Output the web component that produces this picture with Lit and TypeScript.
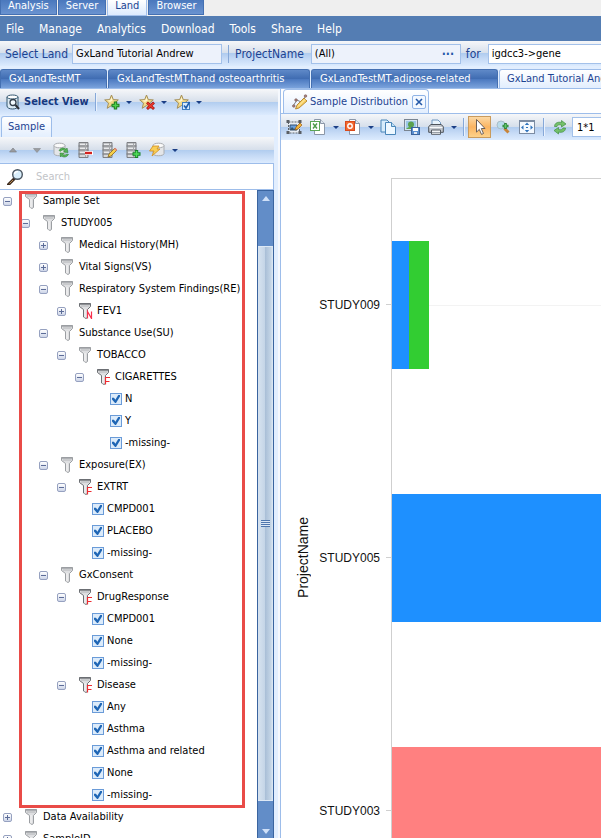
import { LitElement, html, css, svg, nothing } from "lit";
import { customElement, property, state } from "lit/decorators.js";
import { classMap } from "lit/directives/class-map.js";

const star = svg`<path d="M7.5 1 L9.3 5.6 L14.3 5.9 L10.5 9.1 L11.8 14.3 L7.5 11.5 L3.2 14.3 L4.5 9.1 L.7 5.9 L5.7 5.6Z" fill="#f3da8a" stroke="#a5905a" stroke-width="1"/><path d="M7.5 3 L8.6 6.4 L6 8 L3 6.6 L6.3 6.3Z" fill="#fff6cf"/>`;
const rack = svg`<path d="M2 .5h9v15H2z" fill="#c4c6c9" stroke="#7d7f83"/><path d="M1.500 4h10M1.500 8h10M1.500 12h10" stroke="#75777b"/><path d="M3 2.500h7M3 6.500h7M3 10.500h7M3 14h7" stroke="#e9eaec"/><path d="M8.500 1v14" stroke="#a6a8ab"/>`;
const drum = svg`<path d="M1 3.500v8c0 3 11 3 11 0v-8" fill="#e4e6e9" stroke="#a9acb0"/><ellipse cx="6.500" cy="3.500" rx="5.500" ry="2.300" fill="#fafafa" stroke="#a9acb0"/>`;
const sheet = svg`<path d="M4.500 .5h6l4 4v11h-10z" fill="#fff" stroke="#8b97a8"/><path d="M10.500 .5v4h4" fill="#dfe6ef" stroke="#8b97a8"/>`;

const icons: Record<string, unknown> = {
  view: svg`<path d="M2 3v9c0 4 11 4 11 0V3" fill="#dcebf5" stroke="#33566f"/><ellipse cx="7.500" cy="3" rx="5.500" ry="2" fill="#fff" stroke="#33566f"/><circle cx="8" cy="8.500" r="3" fill="#f4fbff" stroke="#333f4a" stroke-width="1.300"/><path d="M10.500 11l3.500 4" stroke="#2b2f35" stroke-width="2"/>`,
  starAdd: svg`${star}<path d="M11.500 7.500v8M7.500 11.500h8" stroke="#1f7a1f" stroke-width="3.400"/><path d="M11.500 8.500v6M8.500 11.500h6" stroke="#4fd24f" stroke-width="1.400"/>`,
  starDel: svg`${star}<path d="M8 8.500l7 6.500M15 8.500l-7 6.500" stroke="#a81410" stroke-width="2.800"/><path d="M8.500 9l6 5.500M14.500 9l-6 5.500" stroke="#ef3b30" stroke-width="1.300"/>`,
  starCheck: svg`${star}<rect x="8.500" y="8.500" width="7" height="7" fill="#d7eafc" stroke="#3f7fc0"/><path d="M10 11.500l2 2.500 3.500-6" fill="none" stroke="#1d5fae" stroke-width="1.600"/>`,
  up: svg`<path d="M8 6l3.500 4h-7z" fill="#9a9ca0" stroke="#77797d" stroke-width=".6"/>`,
  down: svg`<path d="M8 10.500L4.500 6.500h7z" fill="#9a9ca0" stroke="#85888c" stroke-width=".6"/>`,
  dbRefresh: svg`${drum}<path d="M6 8.500c2-3 5-3 7-1l1-1.500 1 4.500-4.500-.5 1.200-1.200c-1.500-1.300-3-1-4 .5z" fill="#56b556" stroke="#2c7f32" stroke-width=".6"/><path d="M15.500 12.500c-2 3-5 3-7 1.500l-1 1-.5-4 4 .3-1.200 1.200c1.500 1.200 3 .8 3.800-.5z" fill="#56b556" stroke="#2c7f32" stroke-width=".6"/>`,
  rackDel: svg`${rack}<path d="M8 11h8" stroke="#fff" stroke-width="4"/><path d="M8 11h7" stroke="#d3221f" stroke-width="2.400"/>`,
  rackEdit: svg`${rack}<path d="M7 15l1-3 6-6 2 2-6 6z" fill="#f6cf4a" stroke="#8a6a1f" stroke-width=".8"/><path d="M13 7l1.200-1.200 2 2L15 9z" fill="#e58a86"/>`,
  rackAdd: svg`${rack}<path d="M11.500 8v8M7.500 12h8" stroke="#178027" stroke-width="3.400"/><path d="M11.500 9v6M8.500 12h6" stroke="#52dd5b" stroke-width="1.600"/>`,
  dbFlash: svg`<g transform="translate(3 0)">${drum}</g><path d="M4 4h6L8 7h3l-8 7 2-5H.5z" fill="#f8ce57" stroke="#d08e1c" stroke-width=".8"/>`,
  chart: svg`<path d="M1 12l4-6 4 2 5-6" fill="none" stroke="#7d7f83"/><g fill="#a9837f" stroke="#6b4a47" stroke-width=".5"><circle cx="1.800" cy="12" r="1.300"/><circle cx="4" cy="6" r="1.300"/><circle cx="13.500" cy="2" r="1.300"/></g><path d="M3.500 15l1.500-4L12 4l3 3-8 7z" fill="#f8cf62" stroke="#a9771e" stroke-width=".8"/><path d="M6 12.500l7-7" stroke="#fff0b5"/>`,
  edit: svg`<rect x="2.500" y="3" width="11" height="11" fill="#e8eef5" stroke="#5d6269" stroke-dasharray="2 1"/><path d="M4 11V6h7v5z" fill="#6aa0de" stroke="#37516f"/><path d="M4 11l2-3 2 2 1.500-1L11 11z" fill="#35556f"/><path d="M.5 1h3v3h-3zM12.500 1h3v3h-3zM.5 12h3v3h-3zM12.500 12h3v3h-3z" fill="#5a5e64"/><path d="M9 11l1-3 4-4 2 2-4 4z" fill="#f3b53c" stroke="#9a5b16" stroke-width=".7"/>`,
  excel: svg`${sheet}<rect x=".5" y="2.500" width="9" height="9" fill="#fff" stroke="#5ca556"/><path d="M3 4.500l4 5M7 4.500l-4 5" stroke="#4d9a48" stroke-width="1.400"/>`,
  ppt: svg`${sheet}<rect x=".5" y="2.500" width="9" height="9" fill="#f1672f" stroke="#d84a1b"/><circle cx="5" cy="7" r="2.200" fill="#e8602c" stroke="#fff" stroke-width="1.400"/>`,
  copy: svg`<path d="M1 1h6l3 3v9H1z" fill="#d7ecfb" stroke="#4a86b8"/><path d="M5.500 3.500h6l4 4v8h-10z" fill="#eef8ff" stroke="#4a86b8"/><path d="M11.500 3.500v4h4" fill="#bfe0f6" stroke="#4a86b8"/>`,
  saveImg: svg`<rect x=".5" y=".5" width="13" height="11" fill="#d5e6f2" stroke="#7a8591"/><rect x="2" y="2" width="10" height="8" fill="#9cc7e6"/><circle cx="7" cy="5.500" r="3" fill="#5aa14e"/><path d="M2 10c3-3 7-3 10 0z" fill="#5fa750"/><rect x="7.500" y="8.500" width="8" height="7" fill="#5a8fd0" stroke="#3a639c"/><rect x="9" y="9" width="5" height="3" fill="#fff"/><rect x="10" y="13" width="3" height="2" fill="#dfe8f3"/>`,
  print: svg`<path d="M4 6V1h6l2.500 2.500V6" fill="#e8f3fc" stroke="#6f95bd"/><path d="M.7 7.500L3 5.500h10l2.300 2v5.800H.7z" fill="#c3c8cf" stroke="#4d535b"/><path d="M1.500 8.500h13" stroke="#f7f8f9"/><path d="M3.500 11h9v4.300h-9z" fill="#f2f4f6" stroke="#555b63"/><path d="M4 13.500h8" stroke="#9aa0a7"/>`,
  cursor: svg`<path d="M4.500 .5l8.500 9H9.300l2.200 5-2 .9-2.200-5-2.800 2.700z" fill="#fff" stroke="#6b5f58"/>`,
  zoomIn: svg`<circle cx="6" cy="6" r="4" fill="#b9dcec" stroke="#a9bdc8"/><path d="M9.500 9.500l4 4" stroke="#c88438" stroke-width="3"/><path d="M10.500 4v6M7.500 7h6" stroke="#2b8237" stroke-width="2.600"/><path d="M10.500 5v4M8.500 7h4" stroke="#5fc96a" stroke-width="1"/>`,
  fit: svg`<rect x=".5" y="1.500" width="15" height="13" fill="#f4f9ff" stroke="#7c8ca3"/><path d="M.5 2h15" stroke="#7c8ca3" stroke-width="2"/><path d="M8 3.500l2.200 2.500H5.800zM8 13.500L5.800 11h4.400zM2 8.500l2.500-2.200v4.400zM14 8.500l-2.500-2.200v4.400z" fill="#2f74bd"/><path d="M7 8.500h2" stroke="#2f74bd"/>`,
  refresh: svg`<path d="M2.500 7.500C2.500 4 6 2.500 9.500 3.500V1.500L14 5 9.500 8V6C7 5.300 5.500 6 5 7.500z" fill="#74c06a" stroke="#418f40" stroke-width=".7"/><path d="M13.500 9c0 3.500-3.500 5-7 4v2L2 11.500l4.500-3v2c2.500.7 4 0 4.500-1.500z" fill="#74c06a" stroke="#418f40" stroke-width=".7"/>`,
  search: svg`<path d="M7 10L1.500 15.500" stroke="#3c2a1d" stroke-width="3" stroke-linecap="round"/><path d="M6 11L2.500 14.500" stroke="#b98a52" stroke-width="1"/><circle cx="10.500" cy="5.500" r="4.800" fill="#d9eefb" stroke="#4a5560" stroke-width="1.400"/><path d="M7.500 5c.5-2 2-2.500 3.500-2.300" fill="none" stroke="#fff" stroke-width="1.400"/>`,
};

const icon = (name: string) =>
  html`<svg class="ico" viewBox="0 0 16 16" width="16" height="16" aria-hidden="true">${icons[name]}</svg>`;

const shared = css`
  :host { box-sizing: border-box; }
  *, *::before, *::after { box-sizing: border-box; }
  button, input {
    font: inherit; color: inherit; margin: 0; padding: 0; border: 0; border-radius: 0; background: none; min-width: 0;
  }
  .ico { display: block; flex: none; }
`;

const barFill = css`linear-gradient(#f6f7f9 0, #d6dfeb 49%, #b0ccef 50%, #c4d9f5 70%, #dcebfe 100%)`;

type Tool = { icon?: string; label: string; kind?: "drop" | "sep" | "on" };

@customElement("tool-strip")
export class ToolStrip extends LitElement {
  @property({ attribute: false }) items: Tool[] = [];

  static styles = [shared, css`
    :host { display: flex; align-items: center; flex: none; padding-left: 1px; }
    button { width: 24px; height: 22px; display: flex; align-items: center; justify-content: center; flex: none; }
    .drop { width: 11px; }
    .drop::after { content: ""; border: 3px solid transparent; border-top-color: #1b3f86; border-bottom: 0; }
    .on { width: 23px; background: linear-gradient(#fcd9a5, #fbb461 50%, #fdd28a); border: 1px solid #c99b5d; }
    .sep { width: 1px; height: 18px; margin: 0 4px; background: #86a8d8; box-shadow: 1px 0 #eaf2fd; }
  `];

  render() {
    return this.items.map((t) =>
      t.kind === "sep"
        ? html`<span class="sep"></span>`
        : html`<button class=${t.kind ?? ""} title=${t.label} aria-label=${t.label}>${t.icon ? icon(t.icon) : nothing}</button>`);
  }
}

type Node = { label: string; kind?: "" | "N" | "F" | "check"; open?: boolean; children?: Node[] };

const leafs = (...names: string[]): Node[] => names.map((label) => ({ label, kind: "check" }));

const sampleSet: Node = {
  label: "Sample Set", open: true, children: [{
    label: "STUDY005", open: true, children: [
      { label: "Medical History(MH)" },
      { label: "Vital Signs(VS)" },
      { label: "Respiratory System Findings(RE)", open: true, children: [{ label: "FEV1", kind: "N" }] },
      { label: "Substance Use(SU)", open: true, children: [
        { label: "TOBACCO", open: true, children: [
          { label: "CIGARETTES", kind: "F", open: true, children: leafs("N", "Y", "-missing-") },
        ] },
      ] },
      { label: "Exposure(EX)", open: true, children: [
        { label: "EXTRT", kind: "F", open: true, children: leafs("CMPD001", "PLACEBO", "-missing-") },
      ] },
      { label: "GxConsent", open: true, children: [
        { label: "DrugResponse", kind: "F", open: true, children: leafs("CMPD001", "None", "-missing-") },
        { label: "Disease", kind: "F", open: true, children: leafs("Any", "Asthma", "Asthma and related", "None", "-missing-") },
      ] },
    ],
  }],
};

@customElement("filter-node")
export class FilterNode extends LitElement {
  @property({ attribute: false }) node!: Node;
  @state() private open = false;

  static styles = [shared, css`
    :host { display: block; }
    .row { display: flex; align-items: center; height: 22px; white-space: nowrap; }
    .children { padding-left: 18px; }
    .toggle {
      position: relative; width: 9px; height: 9px; margin: 0 13px 0 3px; flex: none; border: 1px solid #96a1c0; border-radius: 2px;
      background: linear-gradient(#fff, #cdd5e8);
    }
    .toggle::before { content: ""; position: absolute; left: 1px; top: 3px; width: 5px; height: 1px; background: #5c6c98; }
    .plus::after { content: ""; position: absolute; left: 3px; top: 1px; width: 1px; height: 5px; background: #5c6c98; }
    .funnel { width: 16px; height: 16px; margin-right: 2px; flex: none; }
    label { display: flex; align-items: center; gap: 3px; padding-left: 20px; }
    input {
      appearance: none; display: block; width: 12px; height: 12px; border: 1px solid #6a9bd8; background: #dcebfa; position: relative;
    }
    input:checked::after {
      content: ""; position: absolute; inset: 1px; background: #1f66b5;
      clip-path: polygon(0 35%, 25% 35%, 42% 58%, 78% 0, 100% 0, 100% 20%, 50% 100%, 38% 100%, 0 55%);
    }
  `];

  willUpdate(changed: Map<string, unknown>) {
    if (changed.has("node")) this.open = !!this.node.open;
  }

  render() {
    const n = this.node;
    if (n.kind === "check")
      return html`<div class="row"><label><input type="checkbox" checked />${n.label}</label></div>`;
    const edge = n.kind ? "#6c6f73" : "#9b9ea2";
    return html`
      <div class="row">
        <button class=${classMap({ toggle: true, plus: !this.open })} aria-label=${`Toggle ${n.label}`}
          aria-expanded=${this.open} @click=${() => (this.open = !this.open)}></button>
        <svg class="funnel" viewBox="0 0 16 16" aria-hidden="true">
          <path d="M.5 .5h11v3L8.500 6.500v8L7 15.500 4.500 14V6.500L.5 3.500z" fill="#dedfe1" stroke=${edge} />
          <path d="M.5 1h11" stroke=${edge} stroke-width="1.400" />
          <path d="M2 3h8.500" stroke="#b4b6b9" />
          <path d="M6 6v8.500" stroke="#f4f4f4" stroke-width="1.200" />
          ${n.kind === "N" ? svg`<path d="M8.500 15.500V8.500L12.500 15.500V8.500" fill="none" stroke="#f7304c" stroke-width="1.200"/>` : nothing}
          ${n.kind === "F" ? svg`<path d="M8.500 15.500V8.500H13M8.500 12.500h4" fill="none" stroke="#ee2a30" stroke-width="1.200"/>` : nothing}
        </svg>
        <span>${n.label}</span>
      </div>
      ${this.open && n.children
        ? html`<div class="children">${n.children.map((c) => html`<filter-node .node=${c}></filter-node>`)}</div>`
        : nothing}`;
  }
}

type Bar = { label: string; parts: { color: string; size: number }[] };

const bars: Bar[] = [
  { label: "STUDY009", parts: [{ color: "#1e90ff", size: 17 }, { color: "#32cd32", size: 20 }] },
  { label: "STUDY005", parts: [{ color: "#1e90ff", size: 900 }] },
  { label: "STUDY003", parts: [{ color: "#ff8080", size: 900 }] },
];

@customElement("sample-chart")
export class SampleChart extends LitElement {
  static styles = [shared, css`
    :host {
      display: grid; grid-template-columns: 37px 1fr; padding-top: 38px; background: #fff; color: #111; overflow: hidden; align-items: center;
      font-family: "Liberation Sans", sans-serif; font-size: 12px;
    }
    .axis { writing-mode: vertical-rl; transform: rotate(180deg); justify-self: end; padding-left: 8px; font-size: 14px; }
    .rows { min-width: 0; }
    .row { display: grid; grid-template-columns: 62px 11px 1fr; height: 253px; align-items: center; }
    .name { text-align: right; }
    .tick { height: 1px; width: 5px; justify-self: end; background: #d0d0d0; }
    .plot {
      height: 100%; display: flex; align-items: center; min-width: 0; overflow: hidden; border-left: 1px solid #cfcfcf;
      background: linear-gradient(#f3f3f3, #f3f3f3) center / 100% 1px no-repeat;
    }
    .row:first-child .plot { border-top: 1px solid #cfcfcf; }
    .part { height: 128px; flex: none; }
  `];

  render() {
    return html`
      <div class="axis">ProjectName</div>
      <div class="rows">
        ${bars.map((b) => html`
          <div class="row">
            <span class="name">${b.label}</span><span class="tick"></span>
            <div class="plot">${b.parts.map((p) => html`<div class="part" style="width:${p.size}px;background:${p.color}"></div>`)}</div>
          </div>`)}
      </div>`;
  }
}

@customElement("app-root")
export class AppRoot extends LitElement {
  static styles = [shared, css`
    :host {
      display: flex; flex-direction: column; height: 100vh; overflow: hidden; background: #e2eefe; color: #000;
      font-family: Tahoma, "DejaVu Sans Condensed", "Noto Sans", sans-serif; font-size: 11px; line-height: 14px;
    }
    .modes { display: flex; gap: 1px; height: 16px; flex: none; background: #efefef; }
    .modes button {
      height: 15px; padding: 0 7px 2px; color: #fff; border: 1px solid #4470b2; border-width: 0 1px 1px;
      background: linear-gradient(#4a78bd, #6a93d0); line-height: 12px;
    }
    .modes .current { height: 16px; padding-bottom: 3px; color: #1c4391; background: linear-gradient(#fff, #dceafd); border-color: #a3c0ea; }
    .menu { display: flex; gap: 15px; height: 25px; flex: none; padding: 0 6px; align-items: center; background: #547db3; font-size: 12px; }
    .menu button { color: #fff; }
    .query { display: flex; height: 25px; flex: none; align-items: center; background: ${barFill}; font-size: 12px; color: #1c4391; overflow: hidden; white-space: nowrap; }
    .query label { padding: 0 7px 0 5px; }
    .query label:first-child { padding-right: 4px; }
    .field { height: 20px; border: 1px solid #a3c1ea; background: #edf2fb; color: #000; font-size: 11px; padding: 0 3px; flex: none; display: flex; }
    .field input { flex: 1; }
    .field button { color: #2459a8; font-size: 12px; font-weight: bold; width: 18px; }
    .land { width: 150px; }
    .project { width: 150px; }
    .for { width: 160px; background: #fff; }
    .bar { width: 1px; height: 18px; flex: none; background: #86a8d8; margin: 0 1px 0 6px; }
    .docs { display: flex; gap: 1px; height: 23px; flex: none; padding-top: 3px; border-bottom: 1px solid #9dbdea; overflow: hidden; }
    .docs button {
      flex: none; height: 19px; padding: 0 8px; text-align: left; color: #fff; border: 1px solid #4470b2; border-bottom: 0; border-radius: 3px 3px 0 0;
      background: linear-gradient(#5f89c8, #3f6cb2 49%, #4a78bf 50%, #7ba3dc); white-space: nowrap;
    }
    .docs .current { padding: 0 7px; color: #1c4391; background: linear-gradient(#fff, #e2eefe); border-color: #9dbdea; width: 160px; }
    .d1 { width: 107px; } .d2 { width: 202px; } .d3 { width: 187px; }

    .body { display: grid; grid-template-columns: 278px 2px 1fr; flex: 1; min-height: 0; }
    .left { display: flex; flex-direction: column; min-height: 0; }
    .gutter { background: #f5f8fd; }
    .tools { display: flex; height: 26px; flex: none; align-items: center; background: ${barFill}; overflow: hidden; }
    .view { display: flex; align-items: center; gap: 3px; padding: 0 1px 0 5px; color: #16387f; font-weight: bold; white-space: nowrap; }
    .tabs { height: 22px; flex: none; display: flex; align-items: flex-end; padding-left: 1px; }
    .tab { height: 21px; padding: 0 6px; color: #1c4391; border: 1px solid #9dbdea; border-bottom: 0; border-radius: 3px 3px 0 0; background: linear-gradient(#fff, #e4effe); }
    .inner { margin-right: 4px; display: flex; flex-direction: column; flex: 1; min-height: 0; }
    .search { display: flex; align-items: center; gap: 13px; height: 27px; flex: none; padding-left: 7px; background: #fff; border: 1px solid #9dbdea; border-left: 0; }
    .search input { flex: 1; }
    .search input::placeholder { color: #c2c4c8; opacity: 1; }
    .treebox { display: flex; flex: 1; min-height: 0; background: #fff; }
    .tree { flex: 1; min-width: 0; overflow: hidden; }
    .marked { position: relative; }
    .mark { position: absolute; left: 19px; top: 1px; bottom: -2px; width: 226px; border: 3px solid #e94b47; pointer-events: none; }
    .scroll { width: 17px; flex: none; display: flex; flex-direction: column; border: 1px solid #3a649f; border-width: 0 1px; background: #628dc8; }
    .cap { display: flex; justify-content: center; flex: none; }
    .cap::after { content: ""; width: 0; height: 0; border: 4px solid transparent; }
    .first { height: 56px; align-items: flex-start; padding-top: 5px; border-top: 1px solid #3a649f; }
    .first::after { border-bottom: 5px solid #cfe0f8; border-top: 0; }
    .last { height: 37px; align-items: flex-start; padding-top: 28px; }
    .last::after { border-top: 5px solid #cfe0f8; border-bottom: 0; }
    .thumb {
      flex: 1; border: 1px solid #dde8f5; border-width: 1px 0; display: flex; align-items: center; justify-content: center;
      background: linear-gradient(90deg, #d7e3f0, #c5d5e7 45%, #abc0d8 50%, #c3d4e6 85%, #dfeaf5);
    }
    .thumb::after { content: ""; width: 9px; height: 7px; background: repeating-linear-gradient(#4f76ad 0 1px, #dce7f5 1px 2px); }

    .right { display: flex; flex-direction: column; min-width: 0; min-height: 0; border-left: 1px solid #9dbdea; background: #fff; }
    .rtabs { height: 25px; flex: none; display: flex; align-items: flex-end; padding-left: 2px; border-bottom: 1px solid #9dbdea; }
    .rtab {
      display: flex; align-items: center; height: 24px; padding: 0 2px 0 8px; gap: 2px; color: #1c4391; border: 1px solid #9dbdea; border-bottom: 0;
      border-radius: 4px 4px 0 0; background: linear-gradient(#fff, #e2eefe); white-space: nowrap;
    }
    .close { width: 14px; height: 14px; margin-left: 2px; border: 1px solid #8fb3e6; border-radius: 2px; background: #f3f8ff; display: flex; align-items: center; justify-content: center; }
    .grid { width: 60px; height: 20px; border: 1px solid #a3c1ea; background: #fff; padding: 0 4px; flex: none; color: #000; }
    sample-chart { flex: 1; min-height: 0; align-content: start; }
  `];

  private viewTools: Tool[] = [
    { label: "", kind: "sep" },
    { icon: "starAdd", label: "Add favorite" }, { label: "Add options", kind: "drop" },
    { icon: "starDel", label: "Remove favorite" }, { label: "Remove options", kind: "drop" },
    { icon: "starCheck", label: "Choose favorite" }, { label: "Choose options", kind: "drop" },
  ];
  private sampleTools: Tool[] = [
    { icon: "up", label: "Move up" }, { icon: "down", label: "Move down" }, { icon: "dbRefresh", label: "Reload" },
    { icon: "rackDel", label: "Remove" }, { icon: "rackEdit", label: "Edit" }, { icon: "rackAdd", label: "Add" },
    { icon: "dbFlash", label: "Query" }, { label: "Query options", kind: "drop" },
  ];
  private chartTools: Tool[] = [
    { icon: "edit", label: "Edit chart" },
    { icon: "excel", label: "Export to Excel" }, { label: "Excel options", kind: "drop" },
    { icon: "ppt", label: "Export to PowerPoint" }, { label: "PowerPoint options", kind: "drop" },
    { icon: "copy", label: "Copy" }, { icon: "saveImg", label: "Save image" },
    { icon: "print", label: "Print" }, { label: "Print options", kind: "drop" },
    { label: "", kind: "sep" },
    { icon: "cursor", label: "Select", kind: "on" }, { icon: "zoomIn", label: "Zoom in" }, { icon: "fit", label: "Fit" },
    { label: "", kind: "sep" },
    { icon: "refresh", label: "Refresh" },
  ];

  render() {
    return html`
      <nav class="modes">
        <button>Analysis</button><button>Server</button><button class="current">Land</button><button>Browser</button>
      </nav>
      <nav class="menu">
        ${["File", "Manage", "Analytics", "Download", "Tools", "Share", "Help"].map((m) => html`<button>${m}</button>`)}
      </nav>
      <div class="query">
        <label for="land">Select Land</label>
        <div class="field land"><input id="land" value="GxLand Tutorial Andrew" /></div>
        <span class="bar"></span>
        <label for="project">ProjectName</label>
        <div class="field project"><input id="project" value="(All)" /><button aria-label="Choose project">···</button></div>
        <label for="gene">for</label>
        <div class="field for"><input id="gene" value="igdcc3-&gt;gene" /></div>
      </div>
      <nav class="docs">
        <button class="d1">GxLandTestMT</button><button class="d2">GxLandTestMT.hand osteoarthritis</button>
        <button class="d3">GxLandTestMT.adipose-related</button><button class="current">GxLand Tutorial Andrew</button>
      </nav>
      <div class="body">
        <section class="left">
          <div class="tools">
            <button class="view">${icon("view")}Select View</button>
            <tool-strip .items=${this.viewTools}></tool-strip>
          </div>
          <div class="tabs"><button class="tab">Sample</button></div>
          <div class="inner">
            <div class="tools"><tool-strip .items=${this.sampleTools}></tool-strip></div>
            <div class="search">${icon("search")}<input aria-label="Search" placeholder="Search" /></div>
            <div class="treebox">
              <div class="tree">
                <div class="marked">
                  <filter-node .node=${sampleSet}></filter-node>
                  <div class="mark"></div>
                </div>
                <filter-node .node=${{ label: "Data Availability" }}></filter-node>
                <filter-node .node=${{ label: "SampleID" }}></filter-node>
              </div>
              <div class="scroll"><div class="cap first"></div><div class="thumb"></div><div class="cap last"></div></div>
            </div>
          </div>
        </section>
        <div class="gutter"></div>
        <section class="right">
          <div class="rtabs">
            <div class="rtab">${icon("chart")}<span>Sample Distribution</span>
              <button class="close" aria-label="Close tab">
                <svg width="8" height="8" viewBox="0 0 8 8"><path d="M1 1l6 6M7 1L1 7" stroke="#2459a8" stroke-width="1.600" /></svg>
              </button>
            </div>
          </div>
          <div class="tools">
            <tool-strip .items=${this.chartTools}></tool-strip>
            <input class="grid" aria-label="Chart layout" value="1*1" />
          </div>
          <sample-chart></sample-chart>
        </section>
      </div>`;
  }
}
